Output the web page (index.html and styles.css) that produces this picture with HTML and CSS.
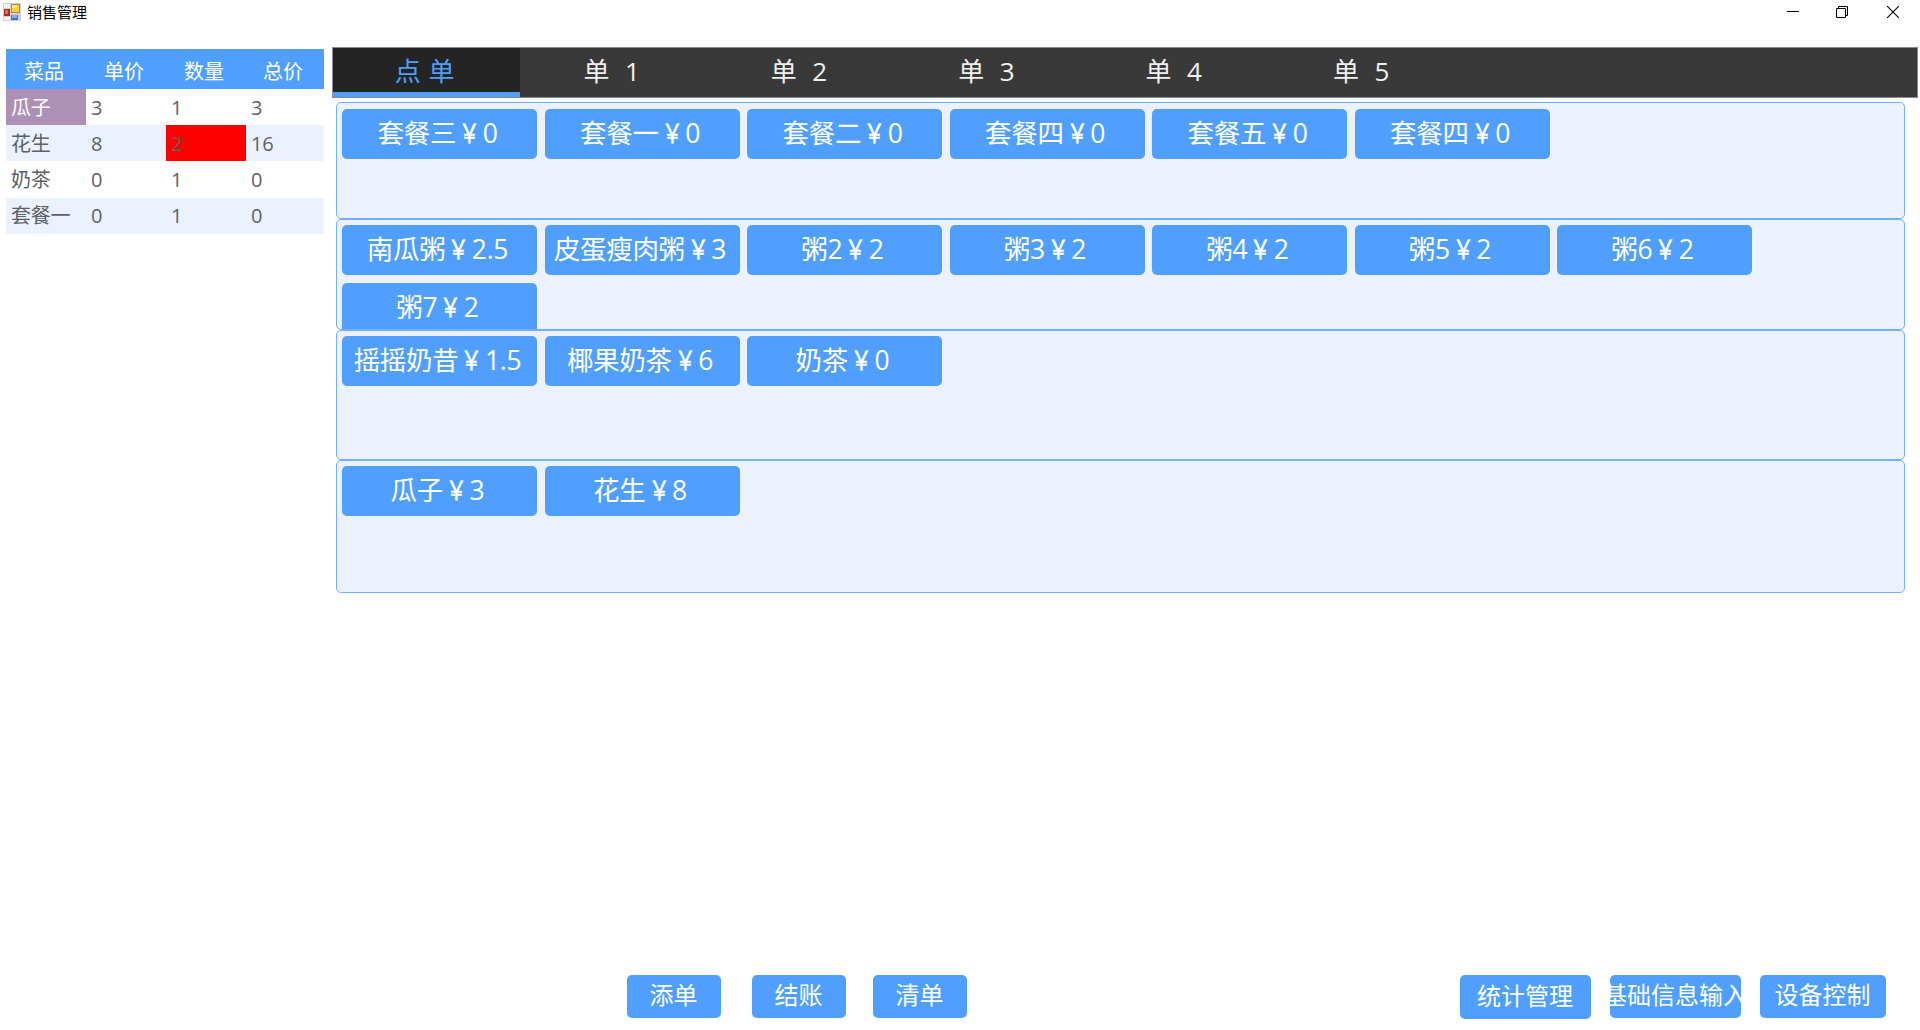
FILE: index.html
```html
<!DOCTYPE html>
<html lang="zh-CN">
<head>
<meta charset="utf-8">
<title>销售管理</title>
<link rel="stylesheet" href="styles.css">
</head>
<body>
<header class="titlebar">
  <svg class="app-icon" width="18" height="18" viewBox="0 0 18 18">
    <rect width="18" height="18" fill="#d3d1cf"/>
    <path d="M1 1h6v4H1zM1 14h6v3H1z" fill="#f4f3f2"/>
    <rect x="8" y="1" width="9" height="9" fill="#c58b12"/>
    <rect x="9" y="2" width="7" height="7" fill="#fbcf3e"/>
    <rect x="9" y="2" width="5" height="3" fill="#fde58a"/>
    <rect x="1" y="6" width="6" height="7" fill="#a92e25"/>
    <rect x="2" y="7" width="3" height="4" fill="#dd6a5c"/>
    <rect x="8" y="12" width="7" height="5" fill="#3f74cf"/>
    <rect x="9" y="12" width="5" height="3" fill="#7fb0f5"/>
  </svg>
  <h1 class="title">销售管理</h1>
  <div class="window-controls">
    <svg width="12" height="12" viewBox="0 0 12 12"><path d="M0 5.5h12" stroke="#000"/></svg>
    <svg width="12" height="12" viewBox="0 0 12 12" fill="none" stroke="#000"><path d="M.5 2.5h9v9h-9zM2.500 2.500v-2h9v9h-2"/></svg>
    <svg class="close" width="12" height="12" viewBox="0 0 12 12" fill="none" stroke="#000" stroke-width="1.1"><path d="M0 0l12 12M12 0L0 12"/></svg>
  </div>
</header>
<main class="workspace">
  <table class="order">
    <thead><tr><th>菜品</th><th>单价</th><th>数量</th><th>总价</th></tr></thead>
    <tbody>
      <tr><td class="selected">瓜子</td><td>3</td><td>1</td><td>3</td></tr>
      <tr><td>花生</td><td>8</td><td class="changed">2</td><td>16</td></tr>
      <tr><td>奶茶</td><td>0</td><td>1</td><td>0</td></tr>
      <tr><td>套餐一</td><td>0</td><td>1</td><td>0</td></tr>
    </tbody>
  </table>
  <section class="content">
    <nav class="tabs">
      <div class="tab active">点 单</div>
      <div class="tab">单  1</div>
      <div class="tab">单  2</div>
      <div class="tab">单  3</div>
      <div class="tab">单  4</div>
      <div class="tab">单  5</div>
    </nav>
    <div class="panels">
      <div class="panel sets">
        <button class="dish">套餐三<span class="yen">￥</span>0</button>
        <button class="dish">套餐一<span class="yen">￥</span>0</button>
        <button class="dish">套餐二<span class="yen">￥</span>0</button>
        <button class="dish">套餐四<span class="yen">￥</span>0</button>
        <button class="dish">套餐五<span class="yen">￥</span>0</button>
        <button class="dish">套餐四<span class="yen">￥</span>0</button>
      </div>
      <div class="panel porridge">
        <button class="dish">南瓜粥<span class="yen">￥</span>2.5</button>
        <button class="dish">皮蛋瘦肉粥<span class="yen">￥</span>3</button>
        <button class="dish">粥2<span class="yen">￥</span>2</button>
        <button class="dish">粥3<span class="yen">￥</span>2</button>
        <button class="dish">粥4<span class="yen">￥</span>2</button>
        <button class="dish">粥5<span class="yen">￥</span>2</button>
        <button class="dish">粥6<span class="yen">￥</span>2</button>
        <button class="dish">粥7<span class="yen">￥</span>2</button>
      </div>
      <div class="panel drinks">
        <button class="dish">摇摇奶昔<span class="yen">￥</span>1.5</button>
        <button class="dish">椰果奶茶<span class="yen">￥</span>6</button>
        <button class="dish">奶茶<span class="yen">￥</span>0</button>
      </div>
      <div class="panel snacks">
        <button class="dish">瓜子<span class="yen">￥</span>3</button>
        <button class="dish">花生<span class="yen">￥</span>8</button>
      </div>
    </div>
  </section>
</main>
<footer class="actions">
  <button class="action add">添单</button>
  <button class="action pay">结账</button>
  <button class="action clear">清单</button>
  <button class="action stats">统计管理</button>
  <button class="action info">基础信息输入</button>
  <button class="action device">设备控制</button>
</footer>
</body>
</html>
```
FILE: styles.css
```css
* { box-sizing: border-box; }

body {
  margin: 0;
  height: 1030px;
  display: flex;
  flex-direction: column;
  overflow: hidden;
  background: #fff;
  font-family: "Open Sans", "Noto Sans CJK SC", sans-serif;
}

button {
  border: 0;
  padding: 0;
  font-family: inherit;
  color: #fff;
  background: #509fff;
  border-radius: 5px;
  white-space: nowrap;
}

.titlebar {
  height: 47px;
  padding: 3px 21px 0 3px;
  display: flex;
  align-items: flex-start;
}

.title {
  margin: 0 auto 0 6px;
  font-size: 15px;
  font-weight: 400;
  line-height: 19px;
  color: #000;
}

.window-controls {
  display: flex;
  gap: 37px;
  padding-top: 3px;
}

.close { margin-left: 2px; }

.workspace {
  display: flex;
  align-items: flex-start;
  height: 928px;
}

.order {
  width: 318px;
  margin: 2px 8px 0 6px;
  table-layout: fixed;
  border-collapse: collapse;
  font-size: 20px;
  line-height: 30px;
  color: #5d6166;
}

.order th {
  height: 40px;
  padding: 5px 4px 0 0;
  font-weight: 400;
  color: #fff;
  background: #509fff;
}

.order td {
  height: 36.2px;
  padding: 1px 0 0 5px;
  white-space: nowrap;
  letter-spacing: -0.2px;
}

.order th:nth-child(-n+3) { width: 80px; }
.order tr:nth-child(even) td { background: #ebf2fe; }
.order .selected { color: #fff; background: #ae90b6; }
.order tr:nth-child(even) .changed { background: #f00; }

.content { width: 1586px; }

.tabs {
  width: 1586px;
  height: 51px;
  display: flex;
  border: 1px solid #8a8a8a;
  background: #393939;
}

.tab {
  width: 187.4px;
  padding-right: 5px;
  font-size: 26px;
  line-height: 47px;
  text-align: center;
  white-space: pre;
  word-spacing: 1px;
  color: #f0f0f0;
}

.tab.active {
  padding-right: 4px;
  color: #509fff;
  background: #242424;
  border-bottom: 5px solid #509fff;
}

.panels {
  width: 1569px;
  margin: 4px 0 0 4px;
}

.panel {
  display: flex;
  flex-wrap: wrap;
  align-content: flex-start;
  gap: 7.5px;
  padding: 5px 0 0 5px;
  border: 1.5px solid #70b0ff;
  border-radius: 5px;
  background: #ebf2fe;
  overflow: hidden;
}

.sets { height: 117px; padding-top: 6px; }
.porridge { height: 111px; }
.drinks { height: 130px; }
.snacks { height: 133px; }

.dish {
  width: 195px;
  height: 50px;
  padding: 0 4px 2px 0;
  font-size: 26.5px;
  line-height: 48px;
  letter-spacing: -0.3px;
}

.yen {
  display: inline-block;
  width: 1em;
  text-align: center;
  transform: scaleX(0.8);
  -webkit-text-stroke: 0.5px #fff;
}

.actions {
  display: flex;
  align-items: flex-start;
  padding-left: 627px;
}

.action {
  height: 43px;
  padding-right: 1px;
  font-size: 24px;
  line-height: 40px;
  display: flex;
  justify-content: center;
  overflow: hidden;
}

.add { width: 94px; margin-right: 31px; }
.pay { width: 94px; margin-right: 27px; }
.clear { width: 94px; margin-right: 493px; }
.stats { width: 131px; height: 44px; margin-right: 19px; line-height: 42px; }
.info { width: 131px; margin-right: 19px; }
.device { width: 126px; }
```
